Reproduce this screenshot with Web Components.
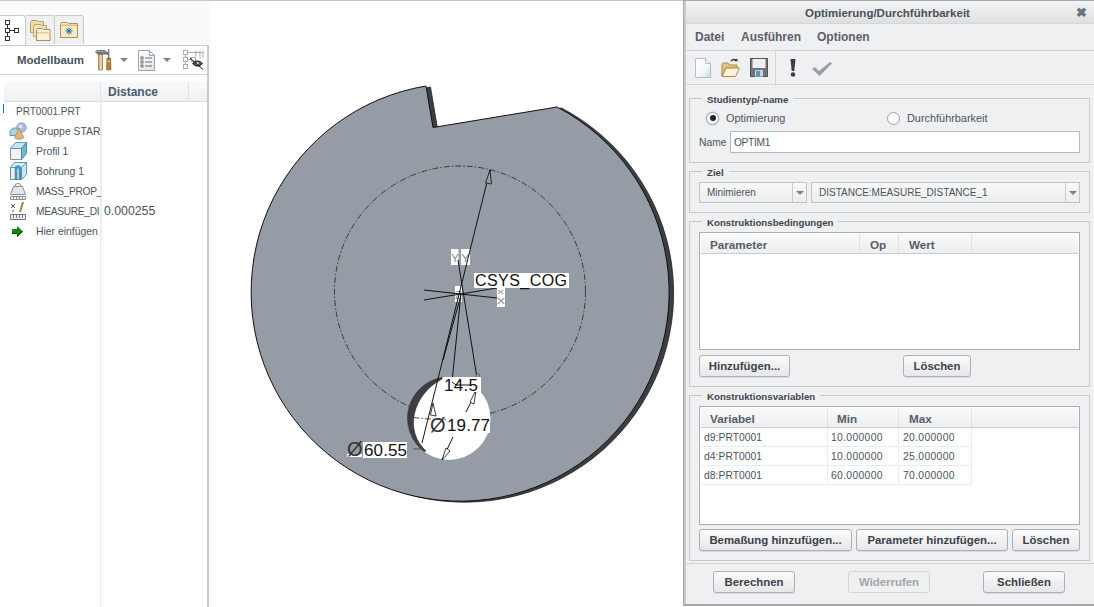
<!DOCTYPE html>
<html lang="de">
<head>
<meta charset="utf-8">
<title>Optimierung/Durchführbarkeit</title>
<style>
html,body{margin:0;padding:0;background:#fff;overflow:hidden}
body{font-family:"Liberation Sans",Arial,sans-serif;width:1094px;height:607px}
</style>
</head>
<body>
<cad-app>
  <model-tree slot="tree"></model-tree>
  <cad-canvas slot="canvas"></cad-canvas>
  <opt-dialog slot="dialog"></opt-dialog>
</cad-app>
<script>
const ICONS = {
  tree:`<svg width="20" height="24" viewBox="0 0 20 24" fill="none" stroke="#333" stroke-width="1"><rect x="1.5" y="1.5" width="4" height="4"/><rect x="1.5" y="9.5" width="4" height="4"/><rect x="1.5" y="17.5" width="4" height="4"/><rect x="10.5" y="9.5" width="4" height="4"/><path d="M3.5 5.5v4M3.5 13.5v4M5.5 11.5h5"/></svg>`,
  folders:`<svg width="22" height="24" viewBox="0 0 22 24"><path d="M1.5 4.5l1-2h6l1 1h5v11h-13z" fill="#f0dcae" stroke="#b99f6a"/><path d="M4.5 8.5l1-2h6l1 1h5v11h-13z" fill="#f3e3bc" stroke="#b99f6a"/><path d="M7.5 12.5l1-2h5l1 1h6.500v11h-13.500z" fill="#fbf1d8" stroke="#a88e58"/><rect x="8" y="14" width="13" height="1.500" fill="#e6cd96"/></svg>`,
  starfolder:`<svg width="18" height="18" viewBox="0 0 18 18"><path d="M.5 3.500l1-2h6l1 1h9v14h-17z" fill="#f7e9c8" stroke="#ad935c"/><rect x="1" y="3.500" width="16" height="1.500" fill="#dcbf80"/><path d="M9 6.500v7M5.500 10h7M6.500 7.500l5 5M11.500 7.500l-5 5" stroke="#0d6e9f" stroke-width="1"/><circle cx="9" cy="10" r="1.100" fill="#0d6e9f"/></svg>`,
  tools:`<svg width="18" height="22" viewBox="0 0 18 22"><path d="M0 2.500l2-1.500h8l1 1.500 2 .5v3l-2-.5H2.500z" fill="#6d7379"/><path d="M1 2h9v1H1z" fill="#a8adb2"/><rect x="3.500" y="5.500" width="4" height="15.500" fill="#d8b878" stroke="#9a7a42" stroke-width=".8"/><rect x="5.200" y="6" width="1.300" height="15" fill="#f0dcb0"/><rect x="13" y="0" width="1.400" height="9" fill="#7a8086"/><path d="M12 9h3.500l.5 11.500-1 .5h-2.500l-1-.5z" fill="#b5812e" stroke="#7c5a1e" stroke-width=".6"/><rect x="12.500" y="12" width="2.500" height="1" fill="#eed6a4"/></svg>`,
  list:`<svg width="17" height="21" viewBox="0 0 17 21" fill="none"><path d="M.5.500h11l5 5v15H.5z" fill="url(#lg)" stroke="#9ba2a9"/><path d="M11.500.500v5h5" stroke="#9ba2a9"/><g stroke="#6b737b"><rect x="3" y="7" width="2" height="2"/><rect x="3" y="11" width="2" height="2"/><rect x="3" y="15" width="2" height="2"/><path d="M7 8h7M7 12h7M7 16h7"/></g><defs><linearGradient id="lg" x1="0" y1="0" x2="1" y2="1"><stop offset="0" stop-color="#fff"/><stop offset="1" stop-color="#dde3e8"/></linearGradient></defs></svg>`,
  hidden:`<svg width="21" height="20" viewBox="0 0 21 20" fill="none"><g stroke="#a9adb2"><rect x=".5" y=".5" width="4" height="4"/><rect x=".5" y="7.500" width="4" height="4"/><rect x=".5" y="14.500" width="4" height="4"/><rect x="8.500" y="7.500" width="4" height="4"/><path d="M2.500 4.500v3M2.500 11.500v3M4.500 9.500h4M5 2.500h15M13 .500v6M17 .500v8M20 .500v8"/></g><path d="M9.500 13.500c3-3.500 7-3.500 10 0-3 3.500-7 3.500-10 0z" fill="#555" stroke="#222"/><circle cx="14.500" cy="13.500" r="1.300" fill="#ddd"/><path d="M7 8l13 11.500" stroke="#111"/></svg>`,
  drop:`<svg width="8" height="4" viewBox="0 0 8 4"><path d="M0 0h8L4 4z" fill="#7d8389"/></svg>`,
  group:`<svg width="19" height="19" viewBox="0 0 19 19"><path d="M1 9l3-3h8v7.500H1z" fill="#a8d4ec" stroke="#4a88ad" stroke-width=".8"/><circle cx="12.500" cy="5.500" r="4.800" fill="#a9b8e2" stroke="#7c88ae" stroke-width=".6"/><circle cx="11.500" cy="4.500" r="2" fill="#dce4f7"/><path d="M10 6L5.500 15.500c1 2.500 8 2.500 9.500 0z" fill="#d8b67c" stroke="#a58449" stroke-width=".6"/></svg>`,
  profile:`<svg width="17" height="18" viewBox="0 0 17 18"><path d="M.5 6.500h11v11H.5z" fill="#f1f2f3" stroke="#88939c"/><path d="M.5 6.500l5-6h11l-5 6z" fill="#c0e6f3" stroke="#5c99b5"/><path d="M11.500 6.500l5-6v11l-5 6z" fill="#6fb9d8" stroke="#4a89a8"/></svg>`,
  hole:`<svg width="17" height="18" viewBox="0 0 17 18"><path d="M.5 5.500h11v12H.5z" fill="#eef1f3" stroke="#7a8790"/><path d="M.5 5.500l4-5h12l-5 5z" fill="#d9edf5" stroke="#5c99b5"/><path d="M11.500 5.500l5-5v12l-5 5z" fill="#cfe4ee" stroke="#5c99b5"/><path d="M5 17V6c0-3 6-3 6 0v11h-2V7c0-1.500-2-1.500-2 0v10z" fill="#4ba3cd" stroke="#2f7ca3" stroke-width=".6"/></svg>`,
  mass:`<svg width="16" height="17" viewBox="0 0 16 17" fill="none"><path d="M5 3a3 2.500 0 0 1 6 0" stroke="#8a8f94"/><path d="M3.500 3.500h9l3 8H.5z" fill="#e4e5e6" stroke="#8a8f94"/><path d="M.5 13.500h15v3H.5z" fill="#f2f2f2" stroke="#8a8f94"/><path d="M3.500 14v2M6.500 14v2M9.500 14v2M12.500 14v2" stroke="#8a8f94"/></svg>`,
  measure:`<svg width="16" height="18" viewBox="0 0 16 18" fill="none"><path d="M1 2l4 4M5 2L1 6" stroke="#5b5140"/><path d="M2 9h2" stroke="#5b5140"/><path d="M13 0l-3 10" stroke="#a58449" stroke-width="2"/><path d="M.5 12.500h15v5H.5z" fill="#eef0f1" stroke="#6f757b"/><path d="M3.500 13v3M6.500 13v3M9.500 13v3M12.500 13v3" stroke="#6f757b"/></svg>`,
  insert:`<svg width="12" height="11" viewBox="0 0 12 11"><path d="M0 3h5V0l6 5.500L5 11V8H0z" fill="#0b8a0f"/><path d="M0 7h5v1H0zM5 8v3l6-5.500-1-.5-4 4z" fill="#0a3a0c"/></svg>`,
  newdoc:`<svg width="16" height="20" viewBox="0 0 16 20"><defs><linearGradient id="n" x1="0" y1="0" x2="1" y2="1"><stop offset="0" stop-color="#fff"/><stop offset=".6" stop-color="#f2f6f8"/><stop offset="1" stop-color="#c9dbe3"/></linearGradient></defs><path d="M.5.500h10l5 5v14H.5z" fill="url(#n)" stroke="#b6bcc2"/><path d="M10.500.500v5h5" fill="#eef1f3" stroke="#b6bcc2"/></svg>`,
  open:`<svg width="19" height="20" viewBox="0 0 19 20"><path d="M10 3c2-2 3.500-2 5 0" fill="none" stroke="#333" stroke-width="1.300"/><path d="M13.500 1h3v3z" fill="#333"/><path d="M1 18V7l1-2h5l1 2h8v3H5z" fill="#e6c682" stroke="#b08a3e"/><path d="M1 18.500l4-8.500h13.500l-4 8.500z" fill="#fdf3d8" stroke="#b08a3e"/></svg>`,
  save:`<svg width="18" height="19" viewBox="0 0 18 19"><rect x=".5" y=".5" width="17" height="18" fill="#6f7478" stroke="#555"/><rect x="2.500" y="1" width="13" height="9" fill="#eef0f1"/><rect x="5" y="12" width="8" height="6.500" fill="#cfd3d6"/><rect x="6" y="13" width="4" height="5.500" fill="#4d9ac4"/></svg>`,
  bang:`<svg width="6" height="18" viewBox="0 0 6 18"><path d="M.5 0h5L4.300 12H1.700z" fill="#3b3f44"/><circle cx="3" cy="15.500" r="2.300" fill="#3b3f44"/></svg>`,
  check:`<svg width="20" height="14" viewBox="0 0 20 14"><path d="M0 7l3-2 4 4L18 0l2 1.500L7.500 14z" fill="#9a9ea3"/></svg>`
};

function define(name, css, html, extra){
  customElements.define(name, class extends HTMLElement{
    constructor(){super();this.attachShadow({mode:'open'});}
    connectedCallback(){
      const body = typeof html==='function'?html(this):html;
      this.shadowRoot.innerHTML = `<style>${css}</style>${body}`;
      if(extra) extra(this);
    }
  });
}

define('cad-icon',`:host{display:inline-flex;align-items:center;justify-content:center;line-height:0}`,
  el=>ICONS[el.getAttribute('name')]||'');

define('cad-app',`
  :host{display:grid;grid-template-columns:211px 472px 411px;width:1094px;height:607px;font-family:"Liberation Sans",Arial,sans-serif;color:#444}
`,`<slot name="tree"></slot><slot name="canvas"></slot><slot name="dialog"></slot>`);

define('tree-row',`
  :host{display:grid;grid-template-columns:101px 1fr;height:20px;font-size:10.400px;color:#4a5360}
  :host([tight]) .a{font-size:10.200px;letter-spacing:-.3px}
  .a{display:flex;align-items:center;overflow:hidden;white-space:nowrap;min-width:0}
  .ic{width:36px;flex:none;display:flex;justify-content:center;box-sizing:border-box}
  .plain{padding-left:16px;font-size:10px}
  .mark{position:absolute;left:3px;width:1px;height:9px;margin-top:-5px;background:#1d6f9c}
  .b{display:flex;align-items:center;padding-left:2px;font-size:12.300px;border-left:1px solid #eceded}
`,el=>{
  const ic=el.getAttribute('icon');
  const label=el.getAttribute('label');
  const val=el.getAttribute('value')||'';
  return `<div class="a ${ic?'':'plain'}">${ic?`<span class="ic"><cad-icon name="${ic}"></cad-icon></span>`:'<span class="mark"></span>'}<span>${label}</span></div><div class="b">${val}</div>`;
});

define('model-tree',`
  :host{display:flex;flex-direction:column;height:607px;background:#fafafa;border-top:1px solid #c9c9c9;box-sizing:border-box;padding-top:14px}
  .tabs{display:flex;height:30px}
  .tab{width:29px;height:29px;box-sizing:border-box;background:#eef0f2;border:1px solid #c8cacc;border-bottom:none;border-left:none;border-radius:0 3px 0 0;display:flex;align-items:center;justify-content:center}
  .tab.on{width:26px;background:#fff;justify-content:flex-start;padding-left:4px;height:30px;margin-bottom:-1px;position:relative;z-index:1}
  .panel{flex:1;width:209px;box-sizing:border-box;background:#fff;border-top:1px solid #c8cacc;border-right:2px solid #c8cacc;display:flex;flex-direction:column;min-height:0}
  .head{height:28px;flex:none;border-bottom:1px solid #cfd1d3;display:flex;align-items:center;padding-left:17px;box-sizing:content-box}
  .title{font-size:11.500px;font-weight:bold;color:#4a5360;width:78px}
  .head cad-icon{flex:none}
  .d1{margin-left:7px}.l{margin-left:10px}.d2{margin-left:8px}.h{margin-left:12px}
  .cols{flex:none;margin:7px 0 0 4px;height:19px;background:linear-gradient(#f9fafa,#eeeff1);border-bottom:1px solid #dcdee0;display:grid;grid-template-columns:97px 88px 1fr;font-size:12px;font-weight:bold;color:#4a5a70}
  .cols div{display:flex;align-items:center;border-right:1px solid #e1e2e4;padding-left:7px;box-sizing:border-box}
  .cols div:first-child{padding:0}.cols div:last-child{border:0}
  .rows{flex:1;position:relative;margin-top:-1px;background:linear-gradient(#eceded,#eceded) 100px 0/1px 100% no-repeat}
`,`
  <div class="tabs">
    <div class="tab on"><cad-icon name="tree"></cad-icon></div>
    <div class="tab"><cad-icon name="folders"></cad-icon></div>
    <div class="tab"><cad-icon name="starfolder"></cad-icon></div>
  </div>
  <div class="panel">
    <div class="head"><span class="title">Modellbaum</span><cad-icon name="tools"></cad-icon><cad-icon class="d1" name="drop"></cad-icon><cad-icon class="l" name="list"></cad-icon><cad-icon class="d2" name="drop"></cad-icon><cad-icon class="h" name="hidden"></cad-icon></div>
    <div class="cols"><div></div><div>Distance</div><div></div></div>
    <div class="rows">
      <tree-row label="PRT0001.PRT"></tree-row>
      <tree-row icon="group" label="Gruppe STAR"></tree-row>
      <tree-row icon="profile" label="Profil 1"></tree-row>
      <tree-row icon="hole" label="Bohrung 1"></tree-row>
      <tree-row tight icon="mass" label="MASS_PROP_"></tree-row>
      <tree-row tight icon="measure" label="MEASURE_DI" value="0.000255"></tree-row>
      <tree-row icon="insert" label="Hier einfügen"></tree-row>
    </div>
  </div>`);

define('cad-canvas',`
  :host{display:block;height:607px;background:#fff;border-top:1px solid #c9c9c9;box-sizing:border-box;overflow:hidden}
  svg{display:block}
  text{font-family:"Liberation Sans",Arial,sans-serif;fill:#111}
  .dim{font-size:16px}
  .num{font-size:17px}
  .phi{font-size:20px;fill:#333}
  .sm{font-size:11px;fill:#8a8f96}
`,`
<svg width="472" height="606" viewBox="211 1 472 606">
  <path d="M426 86A209 209 0 1 0 557 107L433 127.500Z" fill="#3b3f44" stroke="#222" stroke-width=".8" transform="translate(4.500 1)"/>
  <path d="M426 86A209 209 0 1 0 557 107L433 127.500Z" fill="#969ca5" stroke="#111" stroke-width="1"/>
  <circle cx="460" cy="291.500" r="125.500" fill="none" stroke="#222" stroke-width=".8" stroke-dasharray="6 2 1.500 2"/>
  <circle cx="449" cy="418.500" r="41.500" fill="#fff"/>
  <path d="M442 377.500A41.500 41.500 0 0 0 424 451.500L426 451C404 431 412 395 442 379Z" fill="#3b3f44" stroke="#111" stroke-width=".5"/>
  <path d="M413 449h9" stroke="#555" stroke-width="1"/>
  <path d="M413.500 417.500c25 3 52 3 76 0" fill="none" stroke="#222" stroke-width=".8" stroke-dasharray="6 2 1.500 2"/>

  <rect x="451" y="249" width="7.500" height="16" fill="#fff"/><rect x="461" y="249" width="9" height="16" fill="#fff"/>
  <rect x="455" y="286" width="7" height="16" fill="#fff"/><rect x="497" y="288" width="8" height="19" fill="#fff"/>
  <text class="sm" x="451" y="262" textLength="8" lengthAdjust="spacingAndGlyphs">Y</text>
  <text class="sm" x="461" y="262" textLength="9" lengthAdjust="spacingAndGlyphs">Y</text>
  <text class="sm" x="455" y="299" textLength="7" lengthAdjust="spacingAndGlyphs">Z</text>
  <text class="sm" x="497" y="294" style="font-size:8px" textLength="7" lengthAdjust="spacingAndGlyphs">x</text>
  <text class="sm" x="497" y="304" textLength="8" lengthAdjust="spacingAndGlyphs" style="font-size:10px">x</text>

  <g stroke="#111" stroke-width="1" fill="none">
    <path d="M490 170L422 443"/>
    <path d="M458 260L477 378"/>
    <path d="M461 293L452 382"/>
    <path d="M461 295L443 360"/>
    <path d="M424 290L497 298"/>
    <path d="M424 300L497 288"/>
    <path d="M477 390L466 412"/>
    <path d="M453 437L442 460"/>
  </g>
  <path d="M490 170L491.500 184 485.500 183Z" fill="#969ca5" stroke="#111" stroke-width=".8"/>
  <path d="M433 403L430.500 415 436 416Z" fill="#fff" stroke="#111" stroke-width=".8"/>
  <path d="M476 390L470 402 474 404Z" fill="#fff" stroke="#111" stroke-width=".8"/>
  <path d="M442 460L446 448 450 451Z" fill="#fff" stroke="#111" stroke-width=".8"/>
  <circle cx="478" cy="376" r="2" fill="#969ca5" stroke="#666"/>

  <rect x="474" y="273" width="95" height="15" fill="#fff"/>
  <text class="dim" x="475" y="286" textLength="92" lengthAdjust="spacing">CSYS_COG</text>
  <rect x="443" y="377" width="38" height="15" fill="#fff"/>
  <text class="num" x="444" y="391" textLength="34" lengthAdjust="spacing">14.5</text>
  <path d="M452 382l4 3h16" stroke="#111" fill="none"/>
  <rect x="447" y="416" width="43" height="17" fill="#fff"/>
  <text class="phi" x="430" y="432">Ø</text>
  <text class="num" x="447" y="431" textLength="43" lengthAdjust="spacing">19.77</text>
  <rect x="363" y="442" width="44" height="16" fill="#fff"/>
  <rect x="347" y="454" width="15" height="3" fill="#fff"/>
  <text class="phi" x="347" y="456">Ø</text>
  <text class="num" x="364" y="456" textLength="43" lengthAdjust="spacing">60.55</text>
</svg>`);

define('ui-btn',`
  :host{display:inline-flex;align-items:center;justify-content:center;box-sizing:border-box;height:22px;font-size:11.400px;font-weight:bold;color:#3c4148;
    background:linear-gradient(#fbfbfb,#e6e7e9);border:1px solid #adb0b4;border-radius:3px;box-shadow:0 1px 0 #d8d9db;white-space:nowrap}
  :host([disabled]){color:#a2a5a9;background:#eef0f1;border-color:#d3d5d7;box-shadow:none}
`,`<slot></slot>`);

define('ui-combo',`
  :host{display:grid;grid-template-columns:1fr 14px;height:21px;box-sizing:border-box;border:1px solid #c1c3c6;background:linear-gradient(#f8f8f9,#eceded);font-size:10px;color:#4a5360}
  .t{display:flex;align-items:center;padding-left:7px;white-space:nowrap;overflow:hidden}
  .b{display:flex;align-items:center;justify-content:center;border-left:1px solid #c8cacc}
`,el=>`<div class="t"><slot></slot></div><div class="b"><cad-icon name="drop"></cad-icon></div>`);

define('ui-table',`
  :host{display:block;box-sizing:border-box;border:1px solid #a9acb0;background:#fff;padding:1px;overflow:hidden}
  .r{display:grid}
  .h{height:20px;box-sizing:border-box;padding-top:1px;background:linear-gradient(#f9fafa,#eceef0);border-bottom:1px solid #c9cbce;font-size:11.700px;font-weight:bold;color:#555d68}
  .h div{display:flex;align-items:center;border-right:1px solid #dfe1e3;white-space:nowrap}
  .h div:last-child{border:0}
  .c{height:19px;font-size:10.300px;color:#4a5360;box-sizing:border-box}
  .c div{display:flex;align-items:center;border-right:1px solid #e9ebee;border-bottom:1px solid #e9ebee;padding-left:3px;white-space:nowrap;box-sizing:border-box;letter-spacing:.05px}
  .c div.n{letter-spacing:.35px}
  .c div:nth-child(3){padding-left:4px}
`,el=>{
  const cols=el.getAttribute('cols').split(',');
  const pads=(el.getAttribute('pads')||'').split(',');
  const heads=el.getAttribute('heads').split(',');
  const rows=(el.getAttribute('rows')||'').split(';').filter(Boolean);
  const cw=cols.map(c=>c+'px').slice(0,heads.length).join(' ');
  return `<div class="r h" style="grid-template-columns:${cw} 1fr">${heads.map((h,i)=>`<div style="padding-left:${pads[i]||9}px">${h}</div>`).join('')}<div></div></div>`+
   rows.map(r=>`<div class="r c" style="grid-template-columns:${cw}">${r.split(',').map((x,i)=>`<div class="${i?'n':''}">${x}</div>`).join('')}</div>`).join('');
});

define('group-box',`
  :host{display:block}
  fieldset{margin:0;padding:0 9px 0 9px;border:1px solid #c6c8ca;min-width:0}
  legend{margin-left:3px;padding:0 5px;font-size:9.700px;font-weight:bold;line-height:12px;color:#3f454c;height:12px}
  legend span{position:relative;top:2px}
`,el=>`<fieldset><legend><span>${el.getAttribute('label')}</span></legend><slot></slot></fieldset>`);

define('opt-dialog',`
  :host{display:flex;flex-direction:column;width:411px;height:606px;box-sizing:border-box;background:#eff0f2;border:solid #a8a8a8;border-width:1px 0 2px 1px;box-shadow:inset 2px 0 0 #c9cacc;padding-left:2px;color:#4a5360}
  .title{height:23px;flex:none;position:relative;display:flex;align-items:center;justify-content:center;background:linear-gradient(#f3f4f5,#dedfe1);font-size:11.500px;font-weight:bold;color:#4b5158;border-bottom:1px solid #d5d6d8;box-sizing:border-box;padding:1px 5px 0 0}
  .x{position:absolute;right:7px;top:5px;font-size:13px;color:#6d7177;line-height:14px}
  .menu{height:27px;flex:none;display:flex;align-items:center;font-size:12px;font-weight:bold;color:#5b6068;padding-left:9px;box-sizing:border-box;border-bottom:1px solid #d2d4d6}
  .menu span:nth-child(1){width:46px}.menu span:nth-child(2){width:76px}
  .tools{height:34px;flex:none;box-sizing:border-box;border-bottom:1px solid #d2d4d6;display:flex;align-items:center;padding-left:9px}
  .sep{width:1px;height:33px;background:#d2d4d6;margin:0 14px 0 7px}
  .body{padding:7px 4px 0 3px;display:flex;flex-direction:column;gap:2px;flex:none}
  .radio{height:18px;margin-top:5px;margin-left:7px;display:grid;grid-template-columns:181px 1fr;font-size:10.900px;align-items:center}
  .radio label{display:flex;align-items:center;gap:7px}
  .dot{width:13px;height:13px;border-radius:50%;border:1px solid #9aa0a6;background:#fff;box-sizing:border-box;display:inline-flex;align-items:center;justify-content:center}
  .radio label:first-child .dot{box-shadow:0 0 0 1px #cfe3f2}
  .dot i{width:6px;height:6px;background:#222;border-radius:50%;display:block}
  .name{display:flex;align-items:center;height:22px;margin-top:4px;margin-bottom:9px;font-size:10.300px}
  .name>span:first-child{width:31px;flex:none}
  .in{flex:1;height:22px;box-sizing:border-box;border:1px solid #b6b8bb;background:#fff;display:flex;align-items:center;padding-left:3px;color:#4a5360;font-size:10.200px;letter-spacing:-.3px}
  .combos{display:grid;grid-template-columns:108px 1fr;gap:4px;margin:5px 0 9px}
  .t1{height:118px;margin-top:5px}
  .t2{height:119px;margin-top:5px}
  .b1{display:flex;justify-content:space-between;margin:5px 0 9px}
  .b1 ui-btn:first-child{width:91px}.b1 ui-btn:last-child{width:68px;margin-right:109px}
  .b2{display:flex;gap:4px;margin:4px 0 9px}
  .b2 ui-btn:nth-child(1){width:153px}.b2 ui-btn:nth-child(2){width:152px}.b2 ui-btn:nth-child(3){flex:1}
  .foot{flex:1;margin-top:2px;border-top:1px solid #cfd1d3;display:flex;justify-content:space-between;padding:7px 29px 0 27px;box-sizing:border-box;align-items:flex-start}
  .foot ui-btn{width:82px}
`,`
  <div class="title">Optimierung/Durchführbarkeit<span class="x">✖</span></div>
  <div class="menu"><span>Datei</span><span>Ausführen</span><span>Optionen</span></div>
  <div class="tools">
    <cad-icon name="newdoc"></cad-icon><cad-icon name="open" style="margin-left:10px"></cad-icon><cad-icon name="save" style="margin-left:10px"></cad-icon>
    <span class="sep"></span>
    <cad-icon name="bang"></cad-icon><cad-icon name="check" style="margin-left:16px;margin-top:2px"></cad-icon>
  </div>
  <div class="body">
    <group-box label="Studientyp/-name">
      <div class="radio"><label><span class="dot"><i></i></span>Optimierung</label><label><span class="dot"></span>Durchführbarkeit</label></div>
      <div class="name"><span>Name</span><span class="in">OPTIM1</span></div>
    </group-box>
    <group-box label="Ziel">
      <div class="combos"><ui-combo>Minimieren</ui-combo><ui-combo>DISTANCE:MEASURE_DISTANCE_1</ui-combo></div>
    </group-box>
    <group-box label="Konstruktionsbedingungen">
      <ui-table class="t1" cols="159,39,73" pads="9,10,10" heads="Parameter,Op,Wert"></ui-table>
      <div class="b1"><ui-btn>Hinzufügen...</ui-btn><ui-btn>Löschen</ui-btn></div>
    </group-box>
    <group-box label="Konstruktionsvariablen">
      <ui-table class="t2" cols="127,71,73" pads="9,9,10" heads="Variabel,Min,Max" rows="d9:PRT0001,10.000000,20.000000;d4:PRT0001,10.000000,25.000000;d8:PRT0001,60.000000,70.000000"></ui-table>
      <div class="b2"><ui-btn>Bemaßung hinzufügen...</ui-btn><ui-btn>Parameter hinzufügen...</ui-btn><ui-btn>Löschen</ui-btn></div>
    </group-box>
  </div>
  <div class="foot"><ui-btn>Berechnen</ui-btn><ui-btn disabled>Widerrufen</ui-btn><ui-btn>Schließen</ui-btn></div>
`);
</script>
</body>
</html>
